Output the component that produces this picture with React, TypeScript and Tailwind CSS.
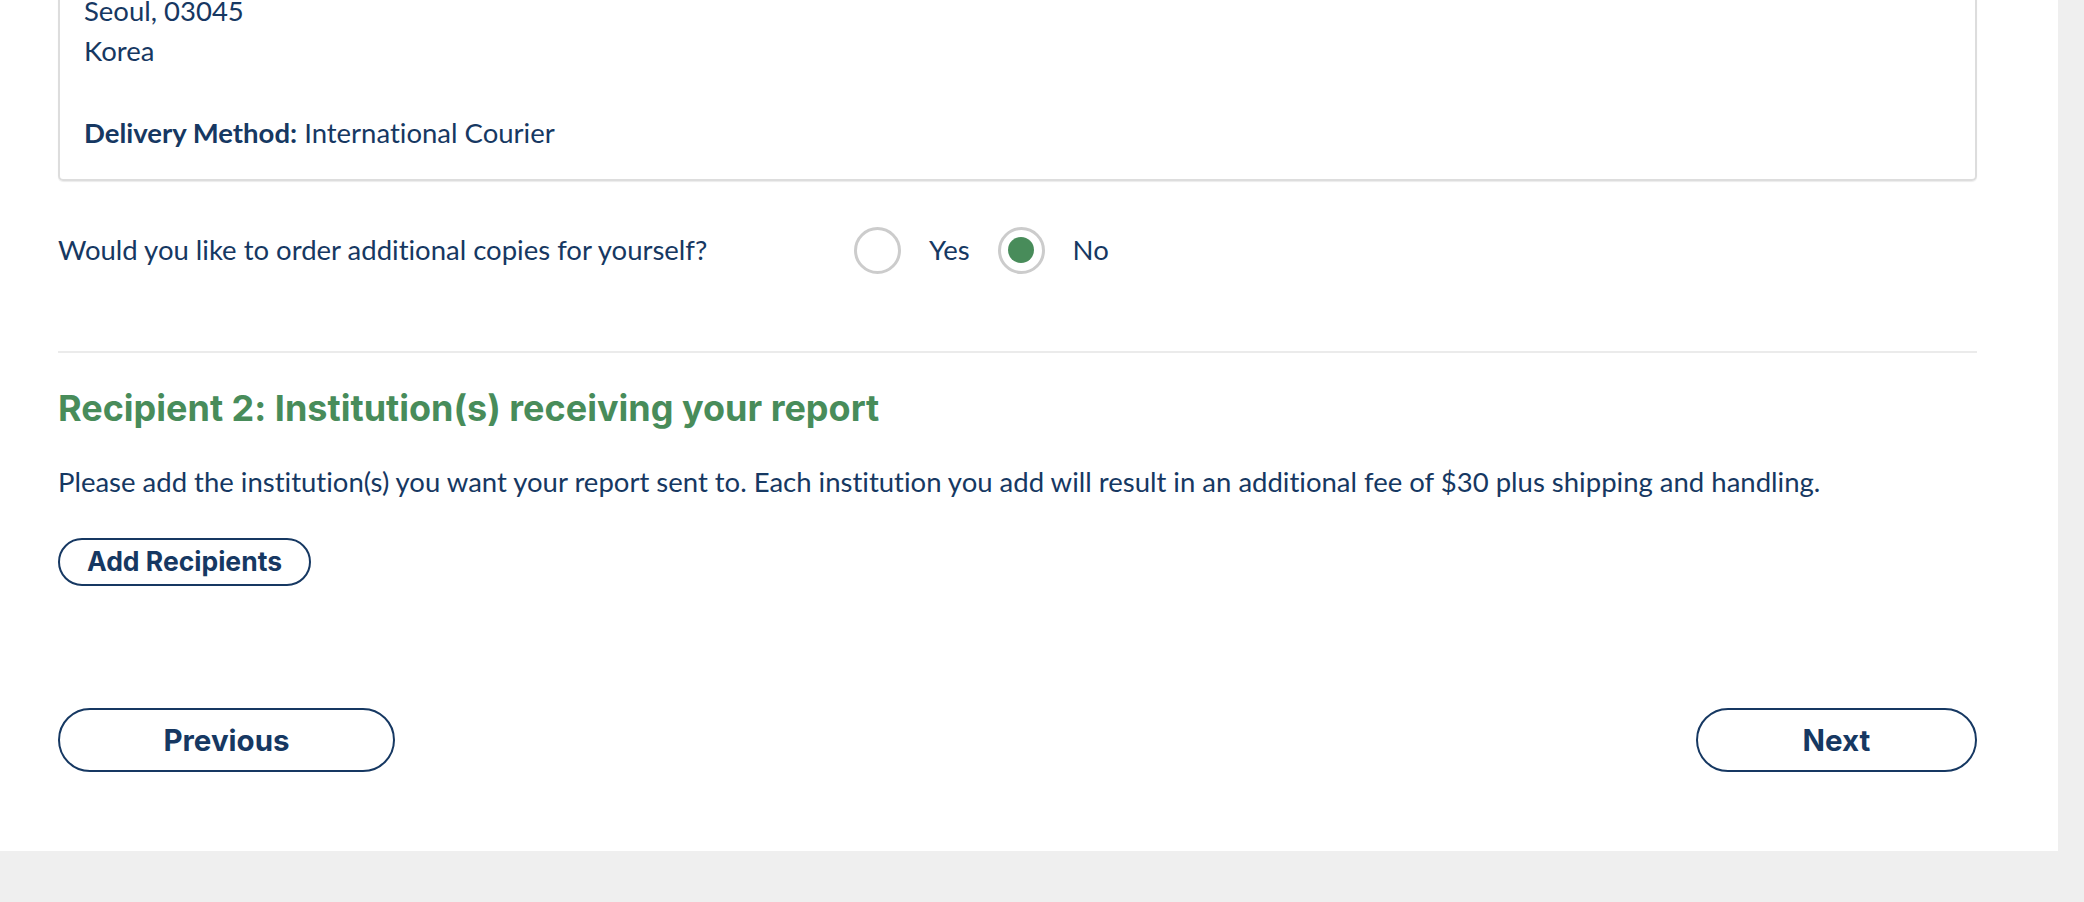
import React from "react";

const body = { fontFamily: "Lato, 'Noto Sans', sans-serif" };
const head = { fontFamily: "Inter, 'Noto Sans', sans-serif" };

function Radio({ checked }: { checked?: boolean }) {
  return (
    <span className="flex h-[47px] w-[47px] shrink-0 items-center justify-center rounded-full border-[3px] border-[#cccccc] bg-white">
      {checked && <span className="h-[26px] w-[26px] rounded-full bg-[#488c5a]" />}
    </span>
  );
}

export default function App() {
  return (
    <div className="min-h-[902px] overflow-hidden bg-[#efefef] [font-variant-ligatures:none]" style={body}>
      <div className="w-[2058px] bg-white pb-[79px] pl-[58px] pr-[81px] text-[27.5px] text-[#163862]">
        <div className="-mt-[40px] rounded-[5px] border-2 border-[#dddddd] px-[24px] pb-[26px] pt-[29px] shadow-[0_1px_1px_rgba(0,0,0,0.08)]">
          <div className="leading-[40px]">Seoul, 03045</div>
          <div className="leading-[40px]">Korea</div>
          <div className="mt-[42px] leading-[40px]">
            <span className="font-bold">Delivery Method:</span> International Courier
          </div>
        </div>

        <div className="mt-[45px] flex h-[48px] items-center">
          <div className="w-[796px] leading-[40px]">Would you like to order additional copies for yourself?</div>
          <div className="flex items-center">
            <Radio />
            <span className="ml-[28px] leading-[40px]">Yes</span>
            <span className="ml-[28px]">
              <Radio checked />
            </span>
            <span className="ml-[28px] leading-[40px]">No</span>
          </div>
        </div>

        <div className="mt-[77px] h-[2px] bg-[#ebebeb]" />

        <h2 className="mt-[37px] text-[36px] font-bold leading-[36px] text-[#488c5a]" style={head}>
          Recipient 2: Institution(s) receiving your report
        </h2>

        <p className="mt-[36px] leading-[40px]">
          Please add the institution(s) you want your report sent to. Each institution you add will result in an additional fee of $30 plus shipping and handling.
        </p>

        <button
          className="mt-[36px] flex h-[48px] w-[253px] items-center justify-center rounded-full border-2 border-[#163862] bg-white text-[26.5px] font-bold text-[#163862]"
          style={head}
        >
          Add Recipients
        </button>

        <div className="mt-[122px] flex items-center justify-between">
          <button
            className="flex h-[64px] w-[337px] items-center justify-center rounded-full border-2 border-[#163862] bg-white text-[29.5px] font-bold text-[#163862]"
            style={head}
          >
            Previous
          </button>
          <button
            className="flex h-[64px] w-[281px] items-center justify-center rounded-full border-2 border-[#163862] bg-white text-[29.5px] font-bold text-[#163862]"
            style={head}
          >
            Next
          </button>
        </div>
      </div>
    </div>
  );
}
